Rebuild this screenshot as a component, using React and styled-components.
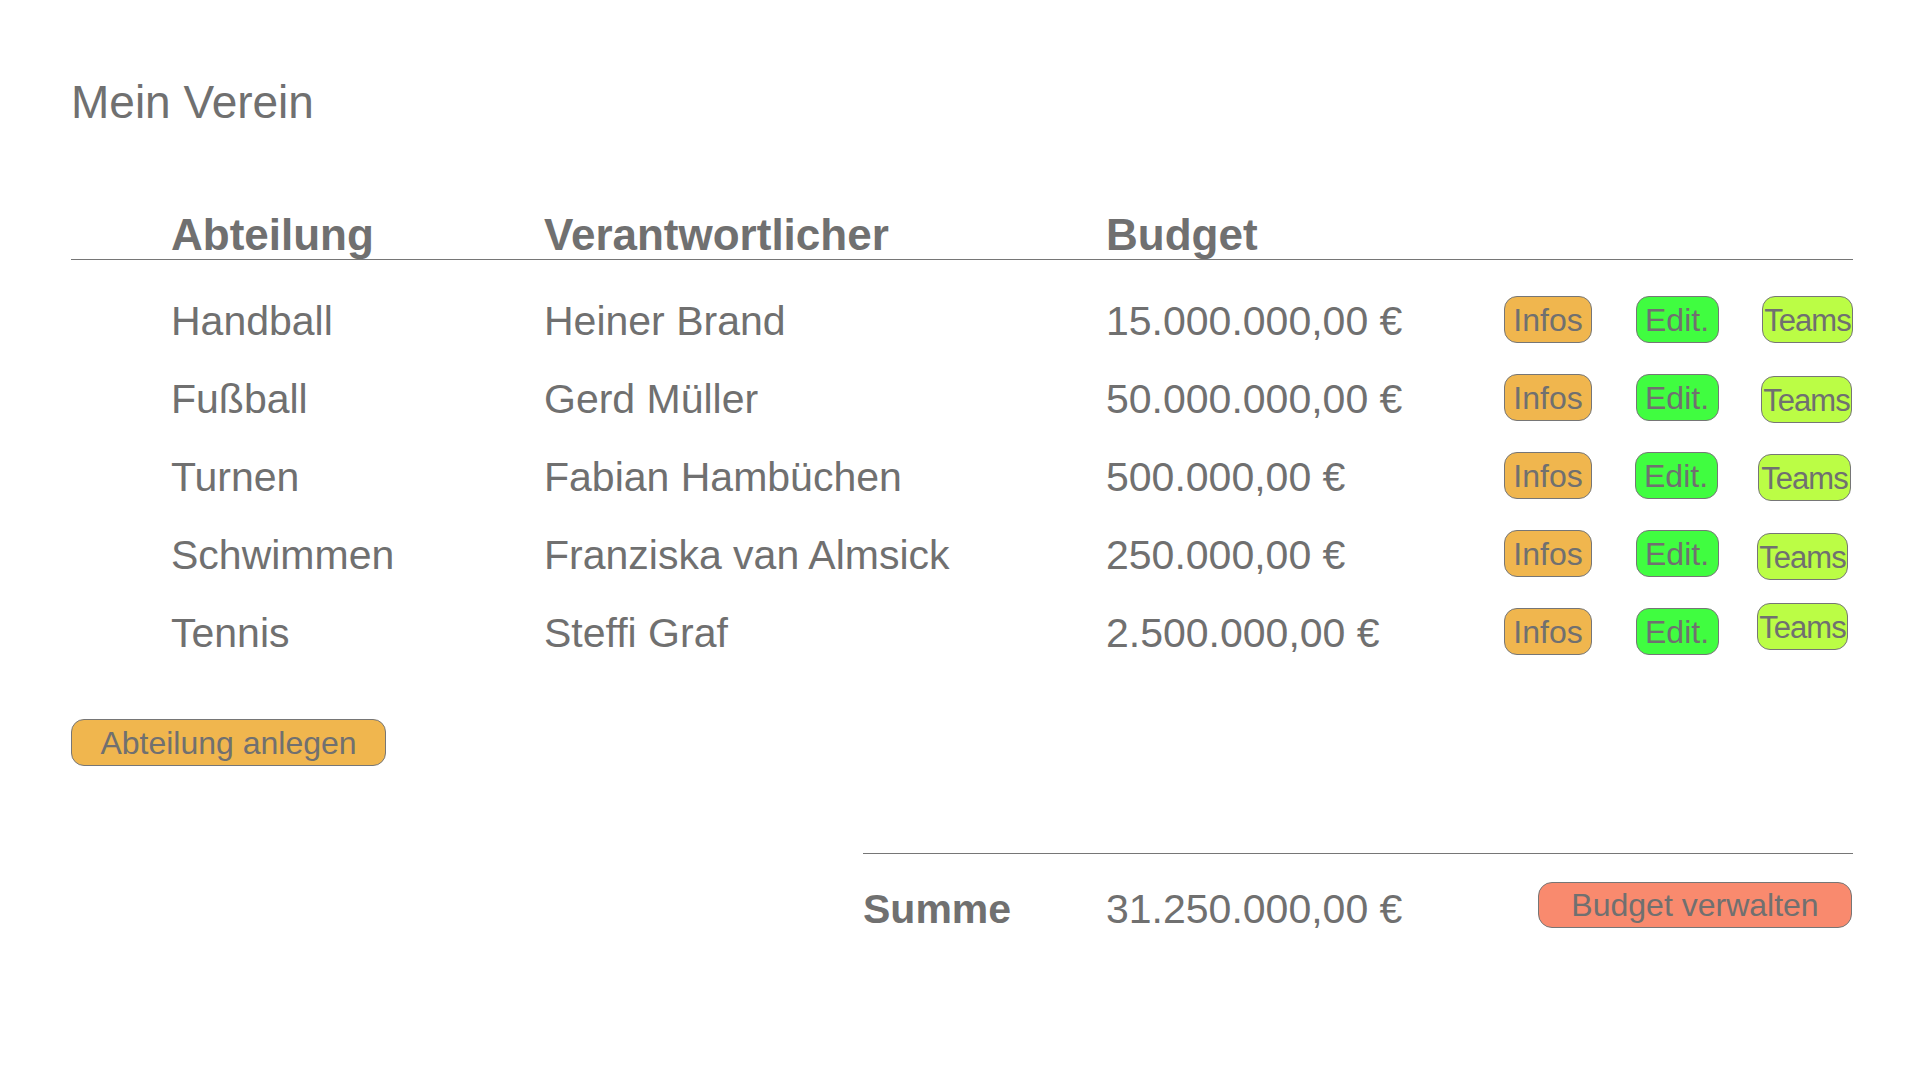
import React from 'react';
import styled, { createGlobalStyle } from 'styled-components';

const GlobalStyle = createGlobalStyle`
  html, body {
    margin: 0;
    padding: 0;
    background: #ffffff;
  }
  body {
    font-family: "Liberation Sans", Arial, Helvetica, sans-serif;
    color: #707070;
  }
`;

const departments = [
  { name: 'Handball', head: 'Heiner Brand', budget: '15.000.000,00 €', teams: [0, 0] },
  { name: 'Fußball', head: 'Gerd Müller', budget: '50.000.000,00 €', teams: [-1, 2] },
  { name: 'Turnen', head: 'Fabian Hambüchen', budget: '500.000,00 €', teams: [-2, 2], wide: true },
  { name: 'Schwimmen', head: 'Franziska van Almsick', budget: '250.000,00 €', teams: [-5, 3] },
  { name: 'Tennis', head: 'Steffi Graf', budget: '2.500.000,00 €', teams: [-5, -5] },
];

const App = () => {
  return (
    <Page>
      <GlobalStyle />
      <Title>Mein Verein</Title>

      <Table>
        <HeaderRow>
          <HeadCell>Abteilung</HeadCell>
          <HeadCell>Verantwortlicher</HeadCell>
          <HeadCell>Budget</HeadCell>
        </HeaderRow>

        <Rows>
          {departments.map((d) => (
            <Row key={d.name}>
              <Cell>{d.name}</Cell>
              <Cell>{d.head}</Cell>
              <Cell>{d.budget}</Cell>
              <Actions>
                <Pill $bg="#f0b64e" $w={88}>Infos</Pill>
                <Pill $bg="#40fd40" $w={83}>Edit.</Pill>
                <Pill
                  $bg="#bbfd45"
                  $w={d.wide ? 93 : 91}
                  $tight
                  $dx={d.teams[0]}
                  $dy={d.teams[1]}
                >
                  Teams
                </Pill>
              </Actions>
            </Row>
          ))}
        </Rows>
      </Table>

      <AddButton>Abteilung anlegen</AddButton>

      <Summary>
        <SumRow>
          <SumLabel>Summe</SumLabel>
          <SumValue>31.250.000,00 €</SumValue>
          <BudgetButton>Budget verwalten</BudgetButton>
        </SumRow>
      </Summary>
    </Page>
  );
};

const Page = styled.div`
  width: 1782px;
  padding: 74px 67px 80px 71px;
`;

const Title = styled.h1`
  margin: 0;
  font-size: 46px;
  line-height: 56px;
  font-weight: 400;
  color: #707070;
`;

const Table = styled.div`
  margin-top: 79px;
`;

const columns = `
  display: grid;
  grid-template-columns: 373px 562px 1fr 349px;
  padding-left: 100px;
  align-items: center;
`;

const HeaderRow = styled.div`
  ${columns}
  height: 50px;
  border-bottom: 1px solid #767676;
`;

const HeadCell = styled.div`
  font-size: 44px;
  font-weight: 700;
  line-height: 48px;
  padding-top: 2px;
  white-space: nowrap;
`;

const Rows = styled.div`
  padding-top: 20px;
`;

const Row = styled.div`
  ${columns}
  height: 78px;
`;

const Cell = styled.div`
  font-size: 41px;
  line-height: 48px;
  padding-top: 3px;
  white-space: nowrap;
`;

const Actions = styled.div`
  display: flex;
  align-items: center;
  justify-content: space-between;
`;

const Pill = styled.div`
  box-sizing: border-box;
  width: ${(p) => p.$w}px;
  height: 47px;
  display: flex;
  align-items: center;
  justify-content: center;
  background: ${(p) => p.$bg};
  border: 1px solid #767676;
  border-radius: 13px;
  font-size: ${(p) => (p.$tight ? 31 : 32)}px;
  letter-spacing: ${(p) => (p.$tight ? '-1px' : '0')};
  line-height: 45px;
  padding-top: 2px;
  white-space: nowrap;
  overflow: visible;
  transform: translate(${(p) => p.$dx || 0}px, ${(p) => p.$dy || 0}px);
`;

const AddButton = styled.div`
  box-sizing: border-box;
  margin-top: 49px;
  width: 315px;
  height: 47px;
  display: flex;
  align-items: center;
  justify-content: center;
  background: #f0b64e;
  border: 1px solid #767676;
  border-radius: 13px;
  font-size: 32px;
  line-height: 45px;
  padding-top: 2px;
  white-space: nowrap;
`;

const Summary = styled.div`
  margin-top: 87px;
  margin-left: 792px;
  border-top: 1px solid #767676;
`;

const SumRow = styled.div`
  display: flex;
  align-items: center;
  padding-top: 23px;
`;

const SumLabel = styled.div`
  width: 243px;
  font-size: 41px;
  font-weight: 700;
  line-height: 48px;
  padding-top: 8px;
`;

const SumValue = styled.div`
  font-size: 41px;
  line-height: 48px;
  padding-top: 8px;
  white-space: nowrap;
`;

const BudgetButton = styled.div`
  box-sizing: border-box;
  margin-left: auto;
  margin-right: 1px;
  width: 314px;
  height: 46px;
  display: flex;
  align-items: center;
  justify-content: center;
  background: #f98a6e;
  border: 1px solid #767676;
  border-radius: 14px;
  font-size: 32px;
  line-height: 44px;
  white-space: nowrap;
`;

export default App;
